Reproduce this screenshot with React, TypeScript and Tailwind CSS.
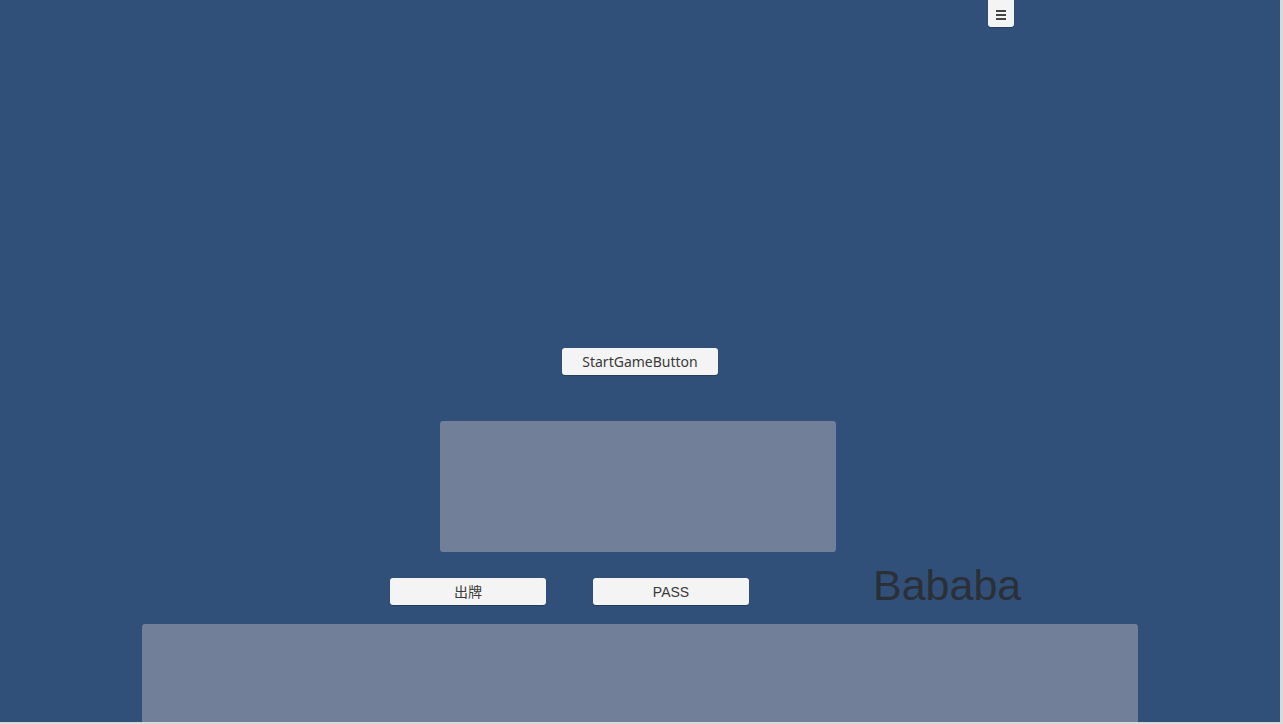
export default function App() {
  return (
    <div className="min-h-screen w-[1283px] bg-[#d9d9d9]">
      <div className="flex h-[722px] w-[1280px] flex-col bg-[#30507a]">
        <button className="ml-[988px] flex h-[27px] w-[26px] flex-col items-center justify-center gap-[2px] rounded-b-[3px] bg-[#f4f4f4] pt-[2px] shadow-[0_1px_1px_rgba(0,0,0,0.25)]">
          <span className="h-[2px] w-[10px] bg-[#444]" />
          <span className="h-[2px] w-[10px] bg-[#444]" />
          <span className="h-[2px] w-[10px] bg-[#444]" />
        </button>

        <button className="ml-[562px] mt-[321px] h-[27px] w-[156px] rounded-[3px] bg-[#f4f4f4] font-['Noto_Sans',sans-serif] text-[14px] text-[#3a3a3a] shadow-[0_1px_1px_rgba(0,0,0,0.25)]">
          StartGameButton
        </button>

        <div className="ml-[440px] mt-[46px] h-[131px] w-[396px] rounded-[3px] bg-[#717f99]" />

        <div className="mt-[26px] flex h-[27px] items-start">
          <button className="ml-[390px] h-[27px] w-[156px] rounded-[3px] bg-[#f4f4f4] pt-[1px] font-['Liberation_Sans','Noto_Sans_CJK_SC',sans-serif] text-[14px] text-[#3a3a3a] shadow-[0_1px_1px_rgba(0,0,0,0.25)]">
            出牌
          </button>
          <button className="ml-[47px] h-[27px] w-[156px] rounded-[3px] bg-[#f4f4f4] pt-[1px] font-['Liberation_Sans',sans-serif] text-[14px] text-[#3a3a3a] shadow-[0_1px_1px_rgba(0,0,0,0.25)]">
            PASS
          </button>
          <span className="-mt-[15px] ml-[124px] h-[44px] font-['Liberation_Sans',sans-serif] text-[43px] leading-[44px] text-[#2b2f36]">
            Bababa
          </span>
        </div>

        <div className="ml-[142px] mt-[19px] w-[996px] flex-1 rounded-t-[3px] bg-[#717f99]" />
      </div>
    </div>
  );
}
